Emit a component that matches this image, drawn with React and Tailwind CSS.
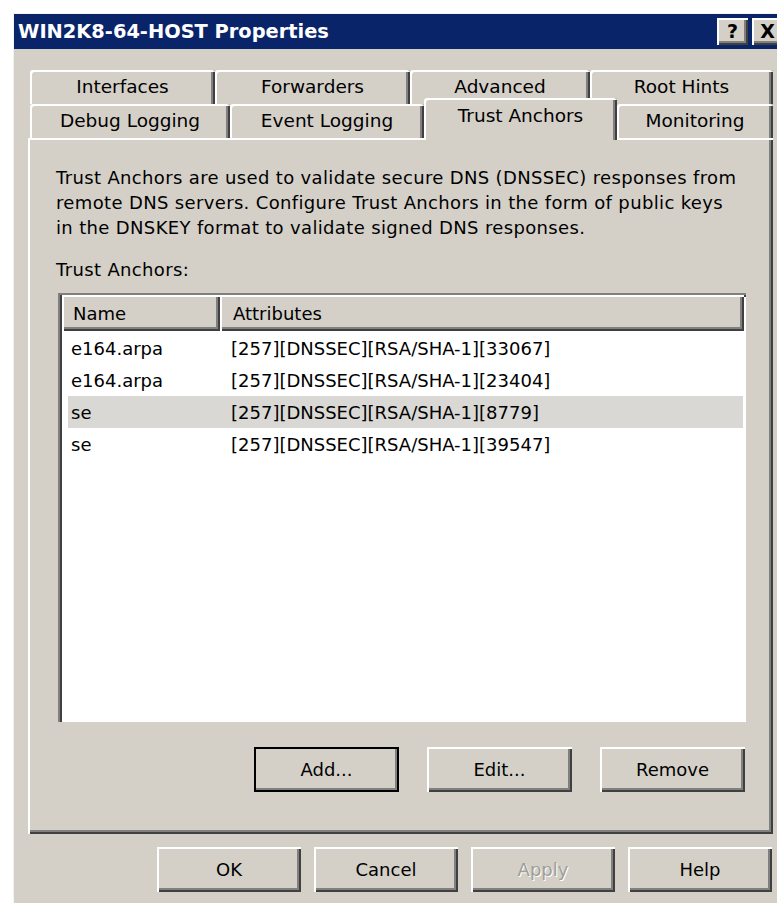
import { useState } from 'react';

const FONT = { fontFamily: '"DejaVu Sans", Verdana, sans-serif' };

// classic 3D edges, doubled for the large dialog
const raised = 'shadow-[inset_2px_2px_0_#ffffff,inset_-2px_-2px_0_#404040,inset_-4px_-4px_0_#808080]';
const sunken = 'shadow-[inset_2px_2px_0_#808080,inset_4px_4px_0_#404040,inset_-2px_-2px_0_#ffffff]';

const anchors = [
  { name: 'e164.arpa', attrs: '[257][DNSSEC][RSA/SHA-1][33067]' },
  { name: 'e164.arpa', attrs: '[257][DNSSEC][RSA/SHA-1][23404]' },
  { name: 'se', attrs: '[257][DNSSEC][RSA/SHA-1][8779]' },
  { name: 'se', attrs: '[257][DNSSEC][RSA/SHA-1][39547]' },
];

const backRow = [
  { label: 'Interfaces', w: 'w-[185px]' },
  { label: 'Forwarders', w: 'w-[195px]' },
  { label: 'Advanced', w: 'w-[180px]' },
  { label: 'Root Hints', w: 'w-[183px]' },
];

const frontRow = [
  { label: 'Debug Logging', w: 'w-[200px]' },
  { label: 'Event Logging', w: 'w-[194px]' },
  { label: 'Trust Anchors', w: 'w-[193px]' },
  { label: 'Monitoring', w: 'w-[156px]' },
];

function Tab({ label, w, active, onClick }) {
  return (
    <button
      onClick={onClick}
      className={`${w} ${
        active ? 'relative z-10 -mt-[6px] h-[42px] -mb-[2px] pb-[6px]' : 'h-[34px]'
      } flex shrink-0 items-center justify-center rounded-tl-[3px] rounded-tr-[3px] bg-[#d4d0c8] text-[18.5px] text-black shadow-[inset_2px_2px_0_#ffffff,inset_-2px_0_0_#404040,inset_-4px_0_0_#808080]`}
    >
      {label}
    </button>
  );
}

function Button({ children, isDefault, disabled, className = '' }) {
  return (
    <button
      className={`h-[45px] bg-[#d4d0c8] text-[18px] ${raised} ${
        isDefault ? 'outline-2 outline-black -outline-offset-2' : ''
      } ${disabled ? 'text-[#a09e99] [text-shadow:1px_1px_0_#ffffff]' : 'text-black'} ${className}`}
    >
      {children}
    </button>
  );
}

export default function App() {
  const [tab, setTab] = useState('Trust Anchors');
  const [selected, setSelected] = useState(2);

  return (
    <div className="h-[903px] w-[777px] overflow-hidden bg-white pl-[13px] pt-[13px]" style={FONT}>
      <div className="h-[900px] w-[774px] border-l border-t border-[#f4f3f0] bg-[#d4d0c8]">
        {/* title bar */}
        <div className="flex h-[35px] items-center bg-[#0a246a] pl-[4px] pr-[4px]">
          <span className="flex-1 text-[19.4px] font-bold text-white">WIN2K8-64-HOST Properties</span>
          <div className="flex gap-[4px]">
            <span className={`flex h-[27px] w-[31px] items-center justify-center bg-[#d4d0c8] text-[19px] font-bold text-black ${raised}`}>?</span>
            <span className={`flex h-[27px] w-[31px] items-center justify-center bg-[#d4d0c8] text-[19px] font-bold text-black ${raised}`}>X</span>
          </div>
        </div>

        <div className="px-[14px] pt-[21px]">
          {/* two rows of tabs */}
          <div className="flex pl-[2px]">
            {backRow.map((t) => (
              <Tab key={t.label} {...t} active={tab === t.label} onClick={() => setTab(t.label)} />
            ))}
          </div>
          <div className="flex h-[34px] items-end pl-[2px]">
            {frontRow.map((t) => (
              <Tab key={t.label} {...t} active={tab === t.label} onClick={() => setTab(t.label)} />
            ))}
          </div>

          {/* tab page */}
          <div className={`h-[696px] bg-[#d4d0c8] px-[28px] pt-[27px] pb-[42px] ${raised} flex flex-col`}>
            <p className="text-[18px] leading-[25px] tracking-[0.35px] text-black">
              Trust Anchors are used to validate secure DNS (DNSSEC) responses from
              <br />
              remote DNS servers. Configure Trust Anchors in the form of public keys
              <br />
              in the DNSKEY format to validate signed DNS responses.
            </p>
            <p className="mt-[17px] text-[18px] leading-[25px] tracking-[0.35px] text-black">Trust Anchors:</p>

            <div className={`mt-[11px] ml-[2px] mr-[-1px] h-[429px] bg-white p-[2px] ${sunken}`}>
              <div className="flex h-[36px] pl-[2px]">
                <div className={`flex w-[158px] items-center bg-[#d4d0c8] pl-[11px] text-[18px] text-black ${raised}`}>Name</div>
                <div className={`flex flex-1 items-center bg-[#d4d0c8] pl-[13px] text-[18px] text-black ${raised}`}>Attributes</div>
              </div>
              <div className="pt-[1px]">
                {anchors.map((a, i) => (
                  <div
                    key={i}
                    onClick={() => setSelected(i)}
                    className={`ml-[8px] mr-[1px] flex h-[32px] items-center text-[18px] text-black ${
                      selected === i ? 'bg-[#dad8d4]' : ''
                    }`}
                  >
                    <span className="w-[150px] pl-[3px]">{a.name}</span>
                    <span className="pl-[13px]">{a.attrs}</span>
                  </div>
                ))}
              </div>
            </div>

            <div className="mt-auto flex justify-end gap-[28px]">
              <Button isDefault className="w-[145px]">Add...</Button>
              <Button className="w-[145px]">Edit...</Button>
              <Button className="w-[145px]">Remove</Button>
            </div>
          </div>

          {/* dialog buttons */}
          <div className="flex justify-end gap-[13px] pt-[13px] pr-[1px]">
            <Button className="w-[144px]">OK</Button>
            <Button className="w-[144px]">Cancel</Button>
            <Button disabled className="w-[144px]">Apply</Button>
            <Button className="w-[144px]">Help</Button>
          </div>
        </div>
      </div>
    </div>
  );
}
